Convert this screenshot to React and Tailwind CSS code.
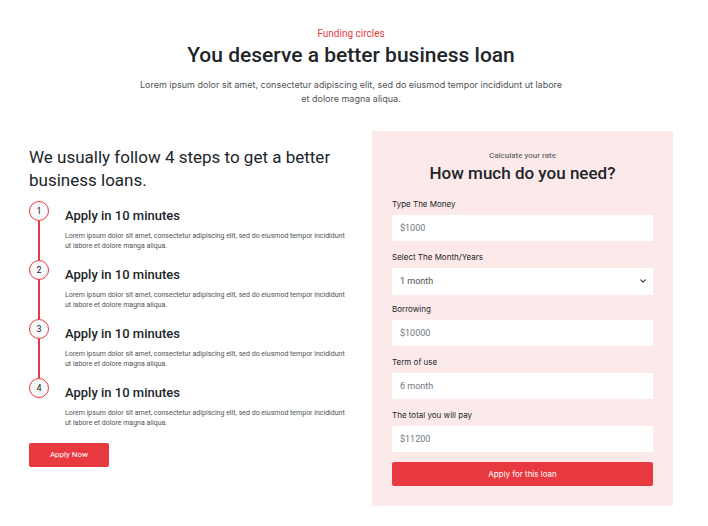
const lorem = 'Lorem ipsum dolor sit amet, consectetur adipiscing elit, sed do eiusmod tempor incididunt ut labore et dolore';

const steps = [
  { title: 'Apply in 10 minutes', text: `${lorem} manga aliqua.` },
  { title: 'Apply in 10 minutes', text: `${lorem} magna aliqua.` },
  { title: 'Apply in 10 minutes', text: `${lorem} magna aliqua.` },
  { title: 'Apply in 10 minutes', text: `${lorem} magna aliqua.` },
];

function Step({ number, title, text, last }) {
  return (
    <li className="flex h-[59px] gap-4">
      <div className="flex w-5 shrink-0 flex-col items-center">
        <span className="flex size-5 shrink-0 items-center justify-center rounded-full border border-[#e7393f] bg-[#f8f9fa] text-[9px] leading-none text-[#212529]">
          {number}
        </span>
        {!last && <span className="w-[2px] grow bg-[#e7393f]" />}
      </div>
      <div className="min-w-0 pt-2">
        <h3 className="text-[13px] leading-[14px] font-medium text-[#212529]">{title}</h3>
        <p className="mt-2 text-[7px] leading-[10px] text-[#4f5356]">{text}</p>
      </div>
    </li>
  );
}

function Field({ id, label, placeholder }) {
  return (
    <div className="mb-2 flex flex-col gap-[3px]">
      <label htmlFor={id} className="font-[Inter,sans-serif] text-[8px] leading-4 text-[#212529]">{label}</label>
      <input
        id={id}
        type="text"
        placeholder={placeholder}
        className="h-[26px] w-full bg-white px-2 text-[9px] text-[#495057] outline-none placeholder:text-[#6c757d]"
      />
    </div>
  );
}

export default function App() {
  return (
    <main className="bg-white pt-[27px] pr-[35px] pb-5 pl-[29px] font-[Roboto,sans-serif] text-[#212529]">
      <header className="mx-auto flex max-w-[430px] flex-col items-center text-center">
        <p className="text-[10px] leading-[14px] text-[#e7393f]">Funding circles</p>
        <h1 className="text-[21px] leading-7 font-medium whitespace-nowrap">You deserve a better business loan</h1>
        <p className="mt-[9px] font-[Inter,sans-serif] text-[9px] leading-[14px] text-[#4f5356]">{lorem} magna aliqua.</p>
      </header>

      <div className="mt-[25px] grid grid-cols-[minmax(0,319fr)_minmax(0,301fr)] items-start gap-6">
        <section className="pt-[15px]">
          <h2 className="text-[17px] leading-[23px]">We usually follow 4 steps to get a better business loans.</h2>
          <ol className="mt-[9px]">
            {steps.map((step, i) => (
              <Step key={i} number={i + 1} title={step.title} text={step.text} last={i === steps.length - 1} />
            ))}
          </ol>
          <button type="button" className="mt-[6px] h-6 w-20 rounded-[2px] bg-[#e7393f] text-[8px] text-white">
            Apply Now
          </button>
        </section>

        <form className="bg-[#fce9ea] p-5">
          <div className="mb-[10px] text-center">
            <p className="text-[8px] leading-[10px] font-medium text-[#6c6c6f]">Calculate your rate</p>
            <h2 className="text-[17px] leading-[25px] font-medium">How much do you need?</h2>
          </div>
          <Field id="money" label="Type The Money" placeholder="$1000" />
          <div className="mb-[6px] flex flex-col gap-[3px]">
            <label htmlFor="period" className="font-[Inter,sans-serif] text-[8px] leading-4 text-[#212529]">Select The Month/Years</label>
            <div className="relative">
              <select id="period" className="block h-[27px] w-full appearance-none bg-white px-2 text-[9px] text-[#495057] outline-none">
                <option>1 month</option>
              </select>
              <svg viewBox="0 0 16 16" className="pointer-events-none absolute top-[10px] right-[7px] size-[6px]" fill="none" stroke="#343a40" strokeWidth="3" strokeLinecap="round" strokeLinejoin="round">
                <path d="M2 5l6 6 6-6" />
              </svg>
            </div>
          </div>
          <Field id="borrowing" label="Borrowing" placeholder="$10000" />
          <Field id="term" label="Term of use" placeholder="6 month" />
          <Field id="total" label="The total you will pay" placeholder="$11200" />
          <button type="button" className="mt-[10px] block h-6 w-full rounded-[2px] bg-[#e7393f] font-[Inter,sans-serif] text-[8px] text-white">
            Apply for this loan
          </button>
        </form>
      </div>
    </main>
  );
}
